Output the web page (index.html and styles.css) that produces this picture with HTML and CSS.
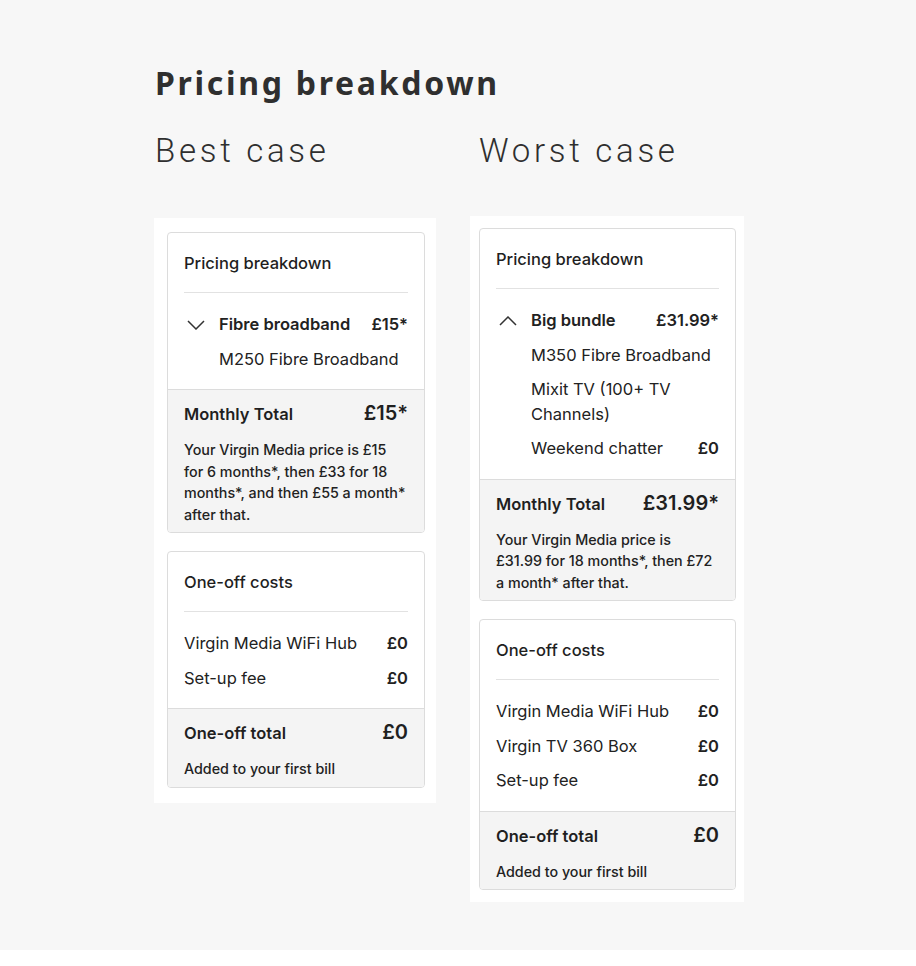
FILE: index.html
```html
<!DOCTYPE html>
<html lang="en">
<head>
<meta charset="utf-8">
<title>Pricing breakdown</title>
<link rel="stylesheet" href="styles.css">
</head>
<body>
<div class="page">
  <h1 class="title">Pricing breakdown</h1>
  <div class="cases">
    <h2 class="case-title case-best">Best case</h2>
    <h2 class="case-title">Worst case</h2>
  </div>
  <div class="panels">
    <div class="panel panel-best">
      <section class="card">
        <div class="card-body">
          <h3 class="card-head">Pricing breakdown</h3>
          <div class="rows">
            <div class="row row-group">
              <svg class="chev" width="18" height="10" viewBox="0 0 18 10"><path d="M1 1 L9 9 L17 1" fill="none" stroke="#333" stroke-width="1.5"/></svg>
              <span class="name">Fibre broadband</span><span class="price">£15*</span>
            </div>
            <div class="row row-sub"><span class="name">M250 Fibre Broadband</span></div>
          </div>
        </div>
        <div class="card-foot">
          <div class="total"><span class="total-label">Monthly Total</span><span class="total-price">£15*</span></div>
          <p class="note">Your Virgin Media price is £15 for 6 months*, then £33 for 18 months*, and then £55 a month* after that.</p>
        </div>
      </section>
      <section class="card">
        <div class="card-body">
          <h3 class="card-head">One-off costs</h3>
          <div class="rows">
            <div class="row"><span class="name">Virgin Media WiFi Hub</span><span class="price">£0</span></div>
            <div class="row"><span class="name">Set-up fee</span><span class="price">£0</span></div>
          </div>
        </div>
        <div class="card-foot">
          <div class="total"><span class="total-label">One-off total</span><span class="total-price">£0</span></div>
          <p class="note note-added">Added to your first bill</p>
        </div>
      </section>
    </div>
    <div class="panel panel-worst">
      <section class="card">
        <div class="card-body">
          <h3 class="card-head">Pricing breakdown</h3>
          <div class="rows">
            <div class="row row-group">
              <svg class="chev" width="18" height="10" viewBox="0 0 18 10"><path d="M1 9 L9 1 L17 9" fill="none" stroke="#333" stroke-width="1.5"/></svg>
              <span class="name">Big bundle</span><span class="price">£31.99*</span>
            </div>
            <div class="row row-sub"><span class="name">M350 Fibre Broadband</span></div>
            <div class="row row-sub"><span class="name name-wrap">Mixit TV (100+ TV Channels)</span></div>
            <div class="row row-sub"><span class="name">Weekend chatter</span><span class="price">£0</span></div>
          </div>
        </div>
        <div class="card-foot">
          <div class="total"><span class="total-label">Monthly Total</span><span class="total-price">£31.99*</span></div>
          <p class="note">Your Virgin Media price is £31.99 for 18 months*, then £72 a month* after that.</p>
        </div>
      </section>
      <section class="card">
        <div class="card-body">
          <h3 class="card-head">One-off costs</h3>
          <div class="rows">
            <div class="row"><span class="name">Virgin Media WiFi Hub</span><span class="price">£0</span></div>
            <div class="row"><span class="name">Virgin TV 360 Box</span><span class="price">£0</span></div>
            <div class="row"><span class="name">Set-up fee</span><span class="price">£0</span></div>
          </div>
        </div>
        <div class="card-foot">
          <div class="total"><span class="total-label">One-off total</span><span class="total-price">£0</span></div>
          <p class="note note-added">Added to your first bill</p>
        </div>
      </section>
    </div>
  </div>
</div>
</body>
</html>
```
FILE: styles.css
```css
* { box-sizing: border-box; }
html, body { margin: 0; padding: 0; background: #ffffff; }
body { font-family: "Inter", "Noto Sans", sans-serif; color: #1f1f1f; }

.page {
  width: 916px;
  height: 950px;
  background: #f7f7f7;
  padding: 63px 0 0 154px;
}

.title {
  margin: 0 0 28px 1px;
  font-family: "Noto Sans", sans-serif;
  font-weight: 700;
  font-size: 32px;
  line-height: 40px;
  letter-spacing: 2.7px;
  color: #2f2f2f;
}

.cases { display: flex; }
.case-title {
  margin: 0;
  font-family: "Roboto", sans-serif;
  font-weight: 300;
  font-size: 33px;
  line-height: 40px;
  letter-spacing: 3.7px;
  color: #2f2f2f;
}
.case-best { width: 324px; margin-left: 1px; }

.panels {
  display: flex;
  align-items: flex-start;
  gap: 34px;
  margin-top: 45px;
}

.panel {
  background: #ffffff;
  display: flex;
  flex-direction: column;
}
.panel-best { width: 282px; padding: 14px 11px 15px 13px; margin-top: 2px; gap: 18px; }
.panel-worst { width: 274px; padding: 12px 8px 12px 9px; gap: 18px; }

.card {
  border: 1px solid #dcdcdc;
  border-radius: 4px;
  overflow: hidden;
  background: #ffffff;
}

.card-body { padding: 18px 16px 18px 16px; }

.card-head {
  margin: 0;
  font-size: 16.5px;
  font-weight: 500;
  line-height: 24px;
  padding-bottom: 17px;
  border-bottom: 1px solid #e2e2e2;
  color: #1f1f1f;
}

.rows {
  display: flex;
  flex-direction: column;
  gap: 10px;
  margin-top: 19px;
}

.row {
  display: flex;
  align-items: flex-start;
  justify-content: space-between;
  font-size: 16.5px;
  line-height: 24.5px;
  color: #222;
}
.row-group .name, .row-group .price { font-weight: 600; }
.row-group .name { flex: 1; }
.row-sub { padding-left: 35px; }
.row-sub .name { flex: 1; }
.name-wrap { max-width: 180px; }

.chev { flex: none; width: 18px; height: 10px; margin: 8px 14px 0 3px; }

.price { font-weight: 600; white-space: nowrap; }

.card-foot {
  background: #f4f4f4;
  border-top: 1px solid #dcdcdc;
  padding: 11px 16px 7px 16px;
}

.total {
  display: flex;
  justify-content: space-between;
  align-items: baseline;
  line-height: 24px;
}
.total-label { font-size: 16.5px; font-weight: 600; color: #1f1f1f; }
.total-price { font-size: 20px; font-weight: 600; color: #1f1f1f; }

.note {
  margin: 13px 0 0 0;
  font-size: 14.3px;
  line-height: 21.6px;
  font-weight: 500;
  color: #222;
}
.note-added { margin-top: 13px; }
```
